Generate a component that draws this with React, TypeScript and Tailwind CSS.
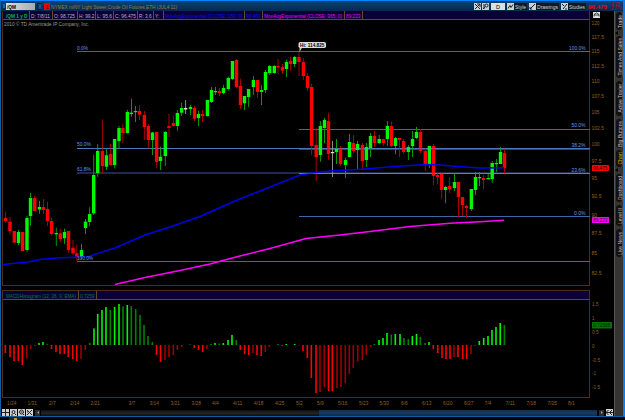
import React from "react";

type Tone = "g" | "r" | "w";
// x, high, low, body top, body bottom, tone
type Candle = [number, number, number, number, number, Tone];

const candles: Candle[] = [
  [5.5, 212, 222.7, 218, 221, "r"], [10, 217, 234.7, 221.7, 231, "r"], [14.3, 231, 243, 231, 242.7, "r"],
  [18.5, 230, 245, 232, 243, "g"], [22.5, 232, 251, 232, 251, "r"], [27, 216, 251.7, 218, 250, "g"],
  [30.5, 193, 225.7, 198, 216, "g"], [34.7, 196, 211, 198, 211, "r"], [39.5, 200.7, 213.7, 207, 209.5, "g"],
  [43.5, 199, 213.7, 207, 210, "r"], [47.5, 201.7, 226, 209, 221, "r"], [51.6, 217.7, 235.7, 221, 234, "r"],
  [56.3, 227.7, 246, 233, 234.3, "g"], [60.3, 229, 242, 233.3, 239, "r"], [64.5, 228.7, 244, 232, 238.3, "g"],
  [68.5, 231, 252.7, 231, 250, "r"], [73, 240, 255, 247.7, 253.3, "r"], [76.8, 244.7, 261, 253.3, 257.3, "r"],
  [81.5, 244, 259, 250, 256.7, "g"], [85.5, 219, 234, 221.7, 228, "g"], [89.6, 207.3, 226, 214, 222, "g"],
  [93.7, 154.7, 215, 175, 213.3, "g"], [97.7, 144, 176.7, 151, 173, "g"], [102.4, 119.3, 174, 151, 166, "r"],
  [106.5, 149.3, 170, 155.3, 166.7, "g"], [110.6, 144, 166, 154, 165, "r"], [114.6, 139, 168.3, 139, 165, "g"],
  [119, 126, 149, 128, 141, "g"], [122.8, 124.3, 143.3, 128, 133, "r"], [127.4, 110, 133.5, 112, 133, "g"],
  [131.5, 98.7, 116.7, 112.7, 114, "g"], [135.5, 106, 122, 111, 112.2, "g"], [139.5, 105.3, 120, 111, 114.7, "r"],
  [144.4, 111, 140, 115, 127, "r"], [148.4, 124, 148.7, 126, 140, "r"], [152.5, 132, 155, 132.5, 140, "g"],
  [156.6, 132, 168, 132, 162, "r"], [160.5, 146.7, 170, 156.7, 161, "g"], [165.3, 131, 166, 132, 156, "g"],
  [169, 114, 137, 126, 128, "r"], [173.4, 115.7, 126.7, 123, 126, "r"], [177.4, 110, 130.7, 113, 126, "g"],
  [181.6, 102.7, 116, 108, 112.7, "g"], [185.6, 100, 114, 108, 109.5, "w"], [190.5, 105, 115, 107, 109, "g"],
  [194.5, 106, 121, 108, 118.7, "r"], [198.5, 110.7, 126, 114, 118, "g"], [202.5, 110, 122, 114, 116, "r"],
  [207.4, 100, 116.7, 100, 116, "g"], [211.5, 87, 103, 90, 102, "g"], [215.5, 87, 95, 91, 92.3, "g"],
  [219.5, 88, 96, 91, 93, "r"], [223.5, 85, 94.3, 88, 93, "g"], [228.3, 76.7, 90.7, 78, 89, "g"],
  [232.5, 61, 80, 61, 79, "g"], [236.5, 59, 88.3, 60, 87, "r"], [240.5, 78.7, 109, 86, 105, "r"],
  [244.5, 96, 110, 96, 103.3, "g"], [248.6, 89, 107, 89, 97, "g"], [253.4, 76, 95, 80, 87, "g"],
  [257.5, 80, 98, 80, 92, "r"], [261.5, 85.3, 105, 90, 92, "g"], [265.5, 70, 93, 72, 90, "g"],
  [269.7, 65, 75, 66, 73, "g"], [274.3, 65, 74, 66, 73, "g"], [278, 59, 74, 66, 67.5, "r"],
  [282.5, 64, 74, 67, 70.7, "r"], [286.5, 59.7, 77, 62, 69, "g"], [290.5, 56.7, 70.7, 61, 64, "r"],
  [294.6, 56, 67, 57, 64, "g"], [299, 52.3, 76, 57, 62, "r"], [303.4, 58.3, 80, 62, 76, "r"],
  [307.5, 73, 91, 76, 88, "r"], [311.6, 84, 155, 87, 146, "r"], [316.2, 128, 181, 145, 157, "r"],
  [320.4, 121, 161.7, 126, 155, "g"], [324.5, 118, 143, 120, 128, "g"], [328.5, 113, 160, 121, 154, "r"],
  [332.5, 141, 177, 152, 153.2, "w"], [336.5, 139, 164, 149, 152, "g"], [340.5, 146, 166, 148, 164, "r"],
  [345.5, 158, 178, 160, 165, "g"], [349.5, 134, 157, 142, 157, "g"], [353.5, 135, 153, 143, 151, "r"],
  [357.5, 141, 169, 144, 150, "g"], [362.4, 143, 169, 145, 161, "r"], [366.4, 143, 167, 147, 160, "g"],
  [370.5, 133, 157, 136, 148, "g"], [374.5, 131, 147, 136, 143, "r"], [379.2, 135, 144, 139, 143, "g"],
  [383.4, 139, 146, 139, 143, "r"], [387.4, 121, 146, 126, 139, "g"], [391.5, 122, 147, 126, 146, "r"],
  [395.5, 137, 154, 138, 146, "g"], [399.5, 138, 157, 138, 140, "r"], [403.6, 139, 154, 141, 152, "r"],
  [408.4, 145, 160, 147, 152, "g"], [412.5, 131, 157, 139, 146, "g"], [416.5, 127, 139, 132, 138, "g"],
  [420.5, 129, 153, 132, 151, "r"], [425.3, 148, 171, 151, 164, "r"], [429.4, 146, 168, 146, 164, "g"],
  [433.5, 144, 185, 146, 176, "r"], [437.5, 173, 184, 175, 177, "r"], [441.6, 172, 199, 174, 190, "r"],
  [445.6, 186, 203, 187, 190, "g"], [449.6, 177, 193, 186, 189, "r"], [454.5, 173, 191, 182, 188, "g"],
  [458.5, 182, 217, 182, 197, "r"], [462.5, 197, 216, 197, 205, "r"], [466.5, 205, 218, 206, 208, "r"],
  [471.4, 189, 211, 189, 209, "g"], [475.5, 172, 195, 177, 190, "g"], [479.5, 172, 186, 177, 178.3, "g"],
  [483.5, 175, 189, 178, 180, "r"], [488.2, 174, 179.3, 178, 179.3, "g"], [492.2, 161, 183, 163, 179, "g"],
  [496.4, 159, 172, 163, 164.2, "g"], [500.5, 147, 164, 152, 164, "g"], [504.5, 149, 174, 153, 168, "r"],
];

// x, signed height
const histogram: [number, number][] = [
  [5.3, -8], [10, -12], [14, -16], [18.3, -16], [22.3, -20], [26.7, -13.3], [30.7, -4], [34.7, -1], [39, 2], [43, 3],
  [47.3, 0.7], [51.5, -4], [56, -7], [60, -9], [64.3, -9], [68.3, -12], [72.7, -14], [76.7, -16], [81, -14], [85.3, -5],
  [89.7, 2], [94, 16.5], [97.7, 31], [102, 35], [106, 38], [110.3, 35], [114.6, 38], [119, 41], [123, 38.5], [127.3, 40],
  [131.3, 39], [135.7, 36], [140, 30], [144, 20], [148, 9], [152.3, 3], [156.5, -10], [160.5, -17], [165, -15], [169, -12],
  [173.3, -10], [177.3, -5], [181.7, -2], [190, 0.7], [194.3, -3], [198.5, -5], [202.7, -7], [207, -4], [211, 1], [215, 2],
  [219.3, 1.5], [223.3, 2], [228, 5], [232, 10], [236.3, 5], [240.3, -5], [244.7, -9], [248.7, -10], [253, -8], [257, -10],
  [261.3, -11], [265.3, -7], [269.3, -2], [278, 1], [282.3, -1], [286.3, 1], [294.7, 1], [299, -0.7], [303, -6], [307.3, -13],
  [311.3, -33], [316, -48], [320, -47], [324.3, -42], [328.5, -46], [332.3, -46], [337, -43], [341, -42], [345.3, -38],
  [349.3, -29], [353.3, -23], [357.7, -16.5], [362.3, -15], [366.3, -10], [370.7, -2], [374.3, 1], [379, 5], [383, 7],
  [387, 12], [391.3, 10.5], [395.3, 11], [400, 11], [404, 7], [408.3, 6], [412.3, 9], [416.5, 11], [420.3, 8], [425, 2],
  [429, 3], [433.3, -4], [437.7, -8], [442, -13], [446, -14], [450, -14], [454, -12], [458, -12], [462.7, -14], [466.7, -14],
  [471, -9], [475, -1], [479.3, 4], [483.7, 7], [488, 9], [492, 15], [496, 18], [500.2, 22], [504.4, 20],
];

const body = { g: "#00f800", r: "#ff0000", w: "#e0e0e0" };
const wick = { g: "#009c00", r: "#a80000", w: "#8c8c8c" };

const fast = "2.5,264.5 28,262 40,259.5 60,257.8 88,256.7 100,252.7 115,248 145,235 170,227 200,216.5 235,201 265,189 300,175 316,172.5 330,171 365,169 395,166.5 425,164.5 440,165 465,167 480,168 504,167.7";
const slow = "115,284.5 145,277.5 180,270.5 210,264 236,257 270,248.5 306,238.5 340,235 370,231.5 410,226.5 450,223.2 480,221.8 504,220.2";

type LabelProps = { x: number; y: number; w: number; fill: string; children: string; size?: number };
function Label({ x, y, w, fill, children, size = 6 }: LabelProps) {
  return (
    <text x={x} y={y} textLength={w} lengthAdjust="spacingAndGlyphs" fill={fill} fontSize={size}>
      {children}
    </text>
  );
}

function PricePlot() {
  return (
    <svg className="block h-[265px] w-[588px]" viewBox="2 20 588 265">
      <Label x={4} y={26.3} w={85} fill="#9a9a9a">2010 © TD Ameritrade IP Company, Inc.</Label>
      <g fill="#3f67a8">
        <rect x="77" y="51" width="513" height="1" />
        <rect x="77" y="148" width="513" height="1" />
        <rect x="77" y="172" width="513" height="2" fill="#1c2b4d" />
        <rect x="77" y="261" width="513" height="1" />
        <rect x="299" y="129" width="291" height="1" />
        <rect x="299" y="149" width="291" height="1" fill="#2a4678" />
        <rect x="299" y="173" width="291" height="1" fill="#4a78c0" />
        <rect x="299" y="216" width="291" height="1" />
      </g>
      {candles.map(([x, high, low, top, bottom, tone], i) => (
        <g key={i}>
          <rect x={x - 0.5} y={high} width="1" height={low - high} fill={wick[tone]} />
          <rect x={x - 1.7} y={top} width="3.4" height={bottom - top} fill={body[tone]} />
        </g>
      ))}
      <polyline points={fast} fill="none" stroke="#0000e8" strokeWidth="1.4" />
      <polyline points={slow} fill="none" stroke="#ff00ff" strokeWidth="1.5" />
      <g opacity="0.3" fill="#6f9cf0">
        <rect x="77" y="148" width="513" height="1" />
        <rect x="299" y="173" width="291" height="1" />
      </g>
      <Label x={77} y={50} w={11} fill="#6496f0">0.0%</Label>
      <Label x={77} y={146.4} w={14} fill="#6496f0">50.0%</Label>
      <Label x={77} y={171.4} w={14} fill="#6496f0">61.8%</Label>
      <Label x={77} y={259.6} w={16} fill="#6496f0">100.0%</Label>
      <Label x={569} y={50} w={16.5} fill="#6496f0">100.0%</Label>
      <Label x={571.5} y={127.4} w={14} fill="#6496f0">50.0%</Label>
      <Label x={571.5} y={147.2} w={14} fill="#6496f0">38.2%</Label>
      <Label x={571.5} y={172.2} w={14} fill="#6496f0">23.6%</Label>
      <Label x={574} y={215} w={11.5} fill="#6496f0">0.0%</Label>
      <path d="M299.5 52V47h3z" fill="#c8c8c8" />
      <rect x="298.5" y="42" width="27.5" height="6" rx="1.8" fill="#dedede" />
      <text x="300" y="47.2" textLength="24.5" lengthAdjust="spacingAndGlyphs" fill="#000" fontSize="6" fontWeight="bold">Hi: 114.825</text>
    </svg>
  );
}

const priceTicks: [number, string][] = [
  [25, "120"], [39.2, "117.5"], [53.3, "115"], [68, "112.5"], [83, "110"], [98.3, "107.5"], [114, "105"], [129.8, "102.5"],
  [146.4, "100"], [163.3, "97.5"], [180.3, "95"], [198.3, "92.5"], [216.5, "90"], [235.4, "87.5"], [255, "85"], [275, "82.5"],
];

function PriceAxis() {
  return (
    <svg className="block h-[275px] w-6" viewBox="590 11 24 275">
      <rect x="593" y="12" width="7" height="6" fill="#e0e0e0" />
      <path d="M594 16.5v-2l2.5-1.5 2.5 1.5v2M594 15h5" fill="none" stroke="#222" strokeWidth=".8" />
      {priceTicks.map(([y, t]) => (
        <Label key={t} x={591.5} y={y} w={t.length === 5 ? 12.5 : t.length === 4 ? 10 : t.length === 3 ? 8 : 5.5} fill="#94601e">{t}</Label>
      ))}
      <rect x="592" y="165" width="17" height="6" rx=".6" fill="#ff0000" />
      <Label x={593} y={170.2} w={14.5} fill="#300000">96.475</Label>
      <rect x="592" y="217" width="17" height="6" rx=".6" fill="#ff00ff" />
      <Label x={593} y={222.2} w={14.5} fill="#300030">89.223</Label>
    </svg>
  );
}

function HistogramPlot() {
  return (
    <svg className="block h-[97px] w-[588px]" viewBox="2 300 588 97">
      {histogram.map(([x, h], i) => {
        const previous = i ? histogram[i - 1][1] : 0;
        const growing = Math.abs(h) >= Math.abs(previous);
        const fill = h > 0 ? (growing ? "#00f400" : "#008200") : growing ? "#fa0000" : "#9c0000";
        return <rect key={i} x={x - 0.8} y={h > 0 ? 345 - h : 345} width="1.6" height={Math.abs(h)} fill={fill} />;
      })}
    </svg>
  );
}

const studyTicks: [number, string, number][] = [
  [306.3, "1.5", 6.5], [320.2, "1", 2.5], [334.2, "0.5", 6.5], [348, "0", 2.5], [361.5, "-0.5", 8], [375.3, "-1", 4], [389.3, "-1.5", 8],
];

function StudyAxis() {
  return (
    <svg className="block h-[108px] w-6" viewBox="590 290 24 108">
      {studyTicks.map(([y, t, w]) => (
        <Label key={t} x={592} y={y} w={w} fill="#94601e">{t}</Label>
      ))}
      <rect x="592" y="322" width="20" height="6.5" rx=".6" fill="#007800" />
      <Label x={593} y={327.4} w={17.5} fill="#001a00">0.72586</Label>
    </svg>
  );
}

const dates: [number, string][] = [
  [7, "1/24"], [27.5, "1/31"], [49, "2/7"], [70, "2/14"], [90.5, "2/21"], [128.5, "3/7"], [149.5, "3/14"], [170.5, "3/21"],
  [191.5, "3/28"], [212, "4/4"], [233, "4/11"], [254, "4/18"], [275, "4/25"], [296, "5/2"], [317, "5/9"], [338, "5/16"],
  [359, "5/23"], [379.5, "5/30"], [401, "6/6"], [422, "6/13"], [443, "6/20"], [464, "6/27"], [484.5, "7/4"], [505.5, "7/11"],
  [526.5, "7/18"], [547.5, "7/25"], [568, "8/1"],
];

function DateAxis() {
  return (
    <svg className="block h-[11px] w-[612px]" viewBox="2 398 612 11">
      {dates.map(([x, t]) => (
        <Label key={t} x={x} y={404.8} w={t.length === 4 ? 9.3 : 6.8} fill="#94601e">{t}</Label>
      ))}
    </svg>
  );
}

function Fit({ w, fill, children, bold }: { w: number; fill: string; children: string; bold?: boolean }) {
  return (
    <svg width={w} height="7" viewBox={`0 0 ${w} 7`} className="block shrink-0 overflow-visible">
      <text x="0" y="5.6" textLength={w} lengthAdjust="spacingAndGlyphs" fill={fill} fontSize="6" fontWeight={bold ? "bold" : "normal"}>
        {children}
      </text>
    </svg>
  );
}

function ToolIcon({ d }: { d: string }) {
  return (
    <svg className="block h-[7px] w-[7px] shrink-0 bg-[#cfcfcf]" viewBox="0 0 7 7">
      <path d={d} fill="none" stroke="#222" strokeWidth="1" />
    </svg>
  );
}

function TitleBar() {
  return (
    <div className="flex h-[10px] w-full shrink-0 items-center bg-linear-to-b from-[#064579] to-[#052950]">
      <div className="ml-[2px] h-[4px] w-[2px] border border-[#1769ac]" />
      <div className="ml-px flex h-[7px] w-[29px] items-center bg-linear-to-r from-[#e0e0e0] to-[#a9a9a9] pl-px">
        <Fit w={9} fill="#000" bold>/QM</Fit>
      </div>
      <div className="ml-[2px] flex h-[7px] w-[5px] items-center justify-center bg-[#061f38]">
        <svg className="h-[5px] w-[4px]" viewBox="0 0 4 5"><path d="M0 1h4M0 4h4M1 2l1 1 1-1" stroke="#2a86d0" fill="none" strokeWidth=".8" /></svg>
      </div>
      <div className="ml-[2px] flex h-[7px] w-[6px] items-center justify-center bg-[#f00000]">
        <Fit w={2.5} fill="#200" bold>1</Fit>
      </div>
      <div className="ml-px"><Fit w={126} fill="#a27c28">NYMEX miNY Light Sweet Crude Oil Futures,ETH (JUL4 11)</Fit></div>
      <div className="ml-auto flex items-center">
        <ToolIcon d="M1 6L6 1M1 1l5 5M3 1h3v3" />
        <div className="w-px" />
        <ToolIcon d="M1 6l2-2M3 2.5a1.5 1.5 0 1 0 3 0a1.5 1.5 0 1 0-3 0M2 1v5" />
        <div className="mx-[2px] flex h-[7px] w-[14px] items-center justify-center bg-[#dedede]"><Fit w={4} fill="#000">D</Fit></div>
        <ToolIcon d="M1 5.5l2-3 1 2 2-3" />
        <div className="mr-[2px] flex h-[7px] w-[13px] items-center justify-center bg-[#101a24]"><Fit w={11} fill="#d0d0d0">Style</Fit></div>
        <ToolIcon d="M1 6L6 1M1 4v2h2" />
        <div className="mr-[2px] flex h-[7px] w-[23px] items-center justify-center bg-[#101a24]"><Fit w={21} fill="#d0d0d0">Drawings</Fit></div>
        <ToolIcon d="M1 1l2 2M2 6l4-5M4 6h2" />
        <div className="mr-[2px] flex h-[7px] w-[18px] items-center justify-center bg-[#101a24]"><Fit w={16} fill="#d0d0d0">Studies</Fit></div>
        <Fit w={19} fill="#ff0000" bold>96.475</Fit>
        <svg className="ml-[3px] mr-px block h-[10px] w-[12px] overflow-visible" viewBox="0 0 12 10">
          <text x="0" y="4.7" fontSize="4.5" textLength="10" lengthAdjust="spacingAndGlyphs" fill="#d80010">-2.25</text>
          <text x="0" y="9" fontSize="4.5" textLength="12" lengthAdjust="spacingAndGlyphs" fill="#d80010">-2.27%</text>
        </svg>
      </div>
    </div>
  );
}

const quoteCells: { t: string; cell: string; w: number; fill: string; bold?: boolean }[] = [
  { t: "/QM 1 y D", cell: "w-[27px] pl-[3px]", w: 21.5, fill: "#00b83c", bold: true },
  { t: "D: 7/8/11", cell: "w-[23px] pl-px", w: 19, fill: "#b4b4c0" },
  { t: "O: 98.725", cell: "w-[24.5px] pl-px", w: 21, fill: "#b4b4c0" },
  { t: "H: 99.2", cell: "w-[18.5px] pl-px", w: 15.5, fill: "#b4b4c0" },
  { t: "L: 95.6", cell: "w-[18px] pl-px", w: 15, fill: "#b4b4c0" },
  { t: "C: 96.475", cell: "w-[24px] pl-px", w: 21, fill: "#b4b4c0" },
  { t: "R: 3.6", cell: "w-[16px] pl-px", w: 12.5, fill: "#b4b4c0" },
  { t: "Y:", cell: "w-[10px] pl-px", w: 4.5, fill: "#b4b4c0" },
  { t: "MovAvgExponential (CLOSE, 150, 0)", cell: "w-[81px] pl-px", w: 77.5, fill: "#0a0aff" },
  { t: "96.460", cell: "w-[18px] pl-px", w: 14.5, fill: "#0a0aff" },
  { t: "MovAvgExponential (CLOSE, 365, 0)", cell: "w-[82px] pl-px", w: 78, fill: "#f000f0" },
  { t: "89.223", cell: "w-[18px] pl-px", w: 14.5, fill: "#f000f0" },
];

const tabs: { t: string; cls: string; w: number; fill: string; notch?: boolean }[] = [
  { t: "Trade", cls: "mt-px h-[18px]", w: 13, fill: "#c4c4c4" },
  { t: "Times And Sales", cls: "h-[42px]", w: 37.5, fill: "#c4c4c4", notch: true },
  { t: "Active Trader", cls: "mt-[3px] h-[35px]", w: 28.5, fill: "#c4c4c4" },
  { t: "Big Buttons", cls: "mt-[3px] h-[29px]", w: 26, fill: "#c4c4c4" },
  { t: "Chart", cls: "mt-[2px] h-[17px]", w: 12.5, fill: "#e0b010" },
  { t: "Dashboard", cls: "mt-px h-[28px]", w: 24, fill: "#c4c4c4", notch: true },
  { t: "Level II", cls: "mt-[3px] h-[21px]", w: 16, fill: "#c4c4c4" },
  { t: "Live News", cls: "mt-[3px] h-[28px]", w: 23, fill: "#c4c4c4" },
];

function SideTabs() {
  return (
    <div className="flex h-[405px] w-[9px] shrink-0 flex-col items-end border-l border-[#555] bg-[#343434]">
      {tabs.map(({ t, cls, w, fill, notch }) => (
        <React.Fragment key={t}>
          {notch && (
            <svg className="block h-[6px] w-[8px] shrink-0" viewBox="0 0 8 6"><path d="M3 1v4L0 3z" fill="#000" /></svg>
          )}
          <div className={`flex w-[7px] shrink-0 items-center justify-center rounded-[3px] border-r border-[#4c4c4c] bg-[#121212] ${cls}`}>
            <svg width="7" height={w} viewBox={`0 0 7 ${w}`} className="block shrink-0 overflow-visible">
              <text transform={`translate(5.5 ${w}) rotate(-90)`} textLength={w} lengthAdjust="spacingAndGlyphs" fontSize="6" fill={fill}>{t}</text>
            </svg>
          </div>
        </React.Fragment>
      ))}
    </div>
  );
}

function ScrollBar() {
  return (
    <div className="flex h-[7px] w-[612px] shrink-0 items-center">
      <div className="flex gap-px">
        <ToolIcon d="M3.5 0v7M0 3.5h7" />
        <ToolIcon d="M2 3a1.5 1.5 0 1 0 3 0a1.5 1.5 0 1 0-3 0M4.5 4.5L6 6M1 6h2" />
        <ToolIcon d="M1.5 3a2 2 0 1 0 4 0a2 2 0 1 0-4 0M2.5 3h2M5 5l1 1" />
        <ToolIcon d="M1 1l5 5M6 1L4 3M1 6l2-2M1 3h1" />
      </div>
      <div className="ml-[2px] flex h-[6px] w-[5px] items-center justify-center bg-[#2b2b2b] text-[#999]">
        <svg className="h-[3px] w-[2px]" viewBox="0 0 2 3"><path d="M2 0L0 1.5 2 3z" fill="currentColor" /></svg>
      </div>
      <div className="ml-px h-[6px] w-[278px] bg-linear-to-b from-[#0c0c0c] via-[#262626] to-[#0e0e0e]" />
      <div className="h-[6px] w-[278px] bg-linear-to-b from-[#102f50] via-[#173b62] to-[#102c4a]" />
      <div className="h-[6px] flex-1" />
      <div className="flex h-[6px] w-[5px] items-center justify-center bg-[#2b2b2b] text-[#999]">
        <svg className="h-[3px] w-[2px]" viewBox="0 0 2 3"><path d="M0 0l2 1.5L0 3z" fill="currentColor" /></svg>
      </div>
      <div className="ml-[2px] mr-px"><ToolIcon d="M0 3.5h7M2.5 1L0 3.5 2.5 6M6 1L3.5 3.5 6 6" /></div>
    </div>
  );
}

export default function App() {
  return (
    <div className="flex h-[420px] w-[625px] flex-col overflow-hidden bg-black font-['Liberation_Sans',Arial,sans-serif]">
      <div className="flex h-[417px] w-full shrink-0 flex-col border-t border-r-2 border-b-[1.5px] border-l border-t-[#0784ff] border-r-[#087ff0] border-b-[#165d9f] border-l-[#125da6]">
        <TitleBar />
        <div className="flex flex-1">
          <div className="flex w-[613px] shrink-0 flex-col pl-px">
            <div className="flex">
              <div className="w-[588px] shrink-0 border-r border-b border-l border-[#4a2e16]">
                <div className="flex h-[9px] items-stretch border-b border-[#6b4430] bg-[#090037]">
                  {quoteCells.map(({ t, cell, w, fill, bold }) => (
                    <div key={t} className={`flex shrink-0 items-center border-r border-[#6b4430] ${cell}`}>
                      <Fit w={w} fill={fill} bold={bold}>{t}</Fit>
                    </div>
                  ))}
                </div>
                <div className="-mx-px h-[265px]"><PricePlot /></div>
              </div>
              <PriceAxis />
            </div>
            <div className="mt-[4px] flex">
              <div className="w-[588px] shrink-0 border border-[#4a2e16]">
                <div className="flex h-[9px] items-stretch border-b border-[#6b4430] bg-[#090037]">
                  <div className="flex w-[76px] items-center border-r border-[#6b4430] pl-[3px]">
                    <Fit w={70} fill="#008028">MACDHistogram (12, 26, 9, EMA)</Fit>
                  </div>
                  <div className="flex w-[18px] items-center border-r border-[#6b4430] pl-px">
                    <Fit w={14.5} fill="#008028">0.7259</Fit>
                  </div>
                </div>
                <div className="-mx-px h-[97px]"><HistogramPlot /></div>
              </div>
              <StudyAxis />
            </div>
            <DateAxis />
            <ScrollBar />
          </div>
          <SideTabs />
        </div>
      </div>
      <div className="flex h-[3px] bg-[#020509]">
        <div className="ml-[9px] flex h-[3px] w-[13px] items-center justify-center bg-[#252525]">
          <div className="h-[2px] w-[3px] bg-[#c89c10]" />
        </div>
      </div>
    </div>
  );
}
